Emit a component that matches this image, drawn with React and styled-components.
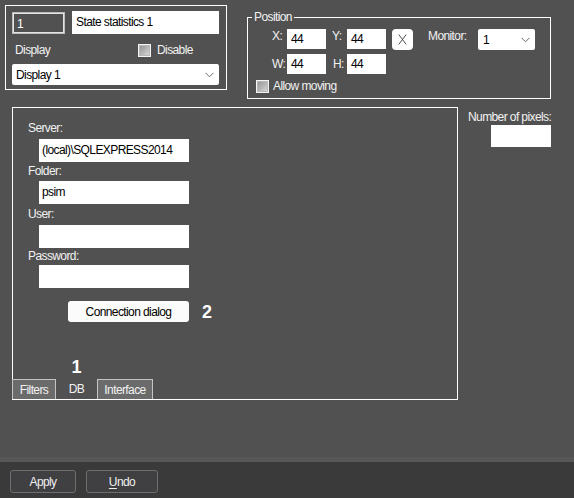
import React from "react";
import styled, { createGlobalStyle } from "styled-components";

const Global = createGlobalStyle`
  html, body { margin: 0; padding: 0; }
  body {
    background: #515151;
    font-family: "Liberation Sans", Arial, sans-serif;
    font-size: 12px;
    letter-spacing: -0.6px;
    color: #f2f2f2;
  }
  * { box-sizing: border-box; }
`;

const Page = styled.div`
  width: 574px;
  height: 498px;
  display: flex;
  flex-direction: column;
  overflow: hidden;
`;

const Workspace = styled.div`
  height: 457px;
  display: flex;
  flex-direction: column;
`;

const TopRow = styled.div`
  display: flex;
  align-items: flex-start;
  padding: 5px 0 0 5px;
`;

const GeneralBox = styled.div`
  width: 222px;
  height: 85px;
  border: 1px solid #ffffff;
  padding: 5px 0 0 6px;
  display: flex;
  flex-direction: column;
`;

const Row = styled.div`
  display: flex;
  align-items: ${(p) => p.$align || "center"};
  margin-top: ${(p) => p.$mt || 0}px;
  padding-left: ${(p) => p.$pl || 0}px;
  gap: ${(p) => p.$gap || 0}px;
`;

const IdField = styled.div`
  width: 53px;
  height: 22px;
  margin-top: 1px;
  border: 1px solid #bdbdbd;
  box-shadow: inset 0 0 0 1px #e4e4e4;
  color: #ffffff;
  padding: 4px 0 0 4px;
  line-height: 14px;
`;

const TextBox = styled.div`
  width: ${(p) => p.$w}px;
  height: ${(p) => p.$h || 22}px;
  margin-left: ${(p) => p.$ml || 0}px;
  margin-top: ${(p) => p.$mt || 0}px;
  background: #ffffff;
  color: #000000;
  line-height: ${(p) => p.$h || 22}px;
  padding-left: ${(p) => p.$pl || 3}px;
  white-space: nowrap;
  overflow: hidden;
  flex-shrink: 0;
`;

const Label = styled.span`
  display: inline-block;
  line-height: 14px;
  width: ${(p) => (p.$w ? `${p.$w}px` : "auto")};
  margin-left: ${(p) => p.$ml || 0}px;
  flex-shrink: 0;
  white-space: nowrap;
`;

const Check = styled.span`
  display: inline-block;
  width: 13px;
  height: 13px;
  margin-left: ${(p) => p.$ml || 0}px;
  border: 1px solid #f4f4f4;
  background: linear-gradient(135deg, #8f8f8f 0%, #bdbdbd 60%, #dcdcdc 100%);
  box-shadow: inset 0 0 0 1px #b8b8b8;
  flex-shrink: 0;
`;

const SelectBox = styled.div`
  width: ${(p) => p.$w}px;
  height: 21px;
  margin-left: ${(p) => p.$ml || 0}px;
  margin-top: ${(p) => p.$mt || 0}px;
  background: #ffffff;
  color: #000000;
  display: flex;
  align-items: center;
  justify-content: space-between;
  padding: 0 5px 0 ${(p) => p.$pl || 4}px;
  border-radius: 2px;
  flex-shrink: 0;
`;

const Chevron = () => (
  <svg width="9" height="6" viewBox="0 0 9 6">
    <polyline points="0.5,0.8 4.5,4.8 8.5,0.8" fill="none" stroke="#6a6a6a" strokeWidth="1" />
  </svg>
);

const PositionSet = styled.fieldset`
  margin: 6px 0 0 20px;
  padding: 0;
  width: 304px;
  height: 88px;
  border: 1px solid #ffffff;
  min-width: 0;
`;

const Legend = styled.legend`
  margin-left: 4px;
  padding: 0 2px;
  line-height: 12px;
  color: #f2f2f2;
`;

const PosContent = styled.div`
  padding-top: 6px;
  display: flex;
  flex-direction: column;
`;

const NumBox = styled.div`
  width: 39px;
  height: 20px;
  background: #ffffff;
  color: #000000;
  line-height: 20px;
  padding-left: 4px;
  flex-shrink: 0;
  margin-left: ${(p) => p.$ml || 0}px;
`;

const ClearButton = styled.div`
  width: 21px;
  height: 21px;
  margin-left: 6px;
  background: #ffffff;
  border-radius: 4px;
  display: flex;
  align-items: center;
  justify-content: center;
  flex-shrink: 0;
`;

const CrossIcon = () => (
  <svg width="9" height="11" viewBox="0 0 9 11">
    <path d="M0.8 0.6 L8.2 10.4 M8.2 0.6 L0.8 10.4" stroke="#3a3a3a" strokeWidth="0.9" fill="none" />
  </svg>
);

const MiddleRow = styled.div`
  display: flex;
  align-items: flex-start;
  margin-top: 8px;
  padding-left: 12px;
`;

const Panel = styled.div`
  width: 446px;
  height: 293px;
  border: 1px solid #ffffff;
  padding: 13px 0 0 15px;
  display: flex;
  flex-direction: column;
`;

const FieldLabel = styled.div`
  line-height: 14px;
  margin-top: ${(p) => p.$mt || 0}px;
`;

const PanelButton = styled.div`
  width: 121px;
  height: 21px;
  margin-left: 40px;
  background: #fbfbfb;
  border-radius: 3px;
  color: #000000;
  display: flex;
  align-items: center;
  justify-content: center;
`;

const Callout = styled.span`
  font-size: 18px;
  font-weight: bold;
  line-height: 18px;
  letter-spacing: 0;
  color: #ffffff;
  margin-left: ${(p) => p.$ml || 0}px;
  margin-bottom: ${(p) => p.$mb || 0}px;
`;

const TabRow = styled.div`
  margin-top: auto;
  margin-left: -16px;
  display: flex;
  align-items: flex-end;
`;

const Tab = styled.div`
  width: ${(p) => p.$w}px;
  height: 20px;
  background: ${(p) => (p.$active ? "transparent" : "#6b6b6b")};
  border: ${(p) => (p.$active ? "none" : "1px solid #c4c4c4")};
  border-bottom: none;
  display: flex;
  align-items: center;
  justify-content: center;
  color: #f2f2f2;
`;

const ActiveTab = styled.div`
  width: ${(p) => p.$w}px;
  display: flex;
  flex-direction: column;
  align-items: center;
`;

const SideColumn = styled.div`
  margin-left: 10px;
  padding-top: 3px;
  display: flex;
  flex-direction: column;
`;

const Band = styled.div`
  height: 5px;
  background: #575757;
`;

const Footer = styled.div`
  flex: 1;
  background: #3b3a3b;
  display: flex;
  align-items: flex-start;
  gap: 10px;
  padding: 8px 0 0 10px;
`;

const FooterButton = styled.div`
  width: ${(p) => p.$w}px;
  height: 23px;
  border: 1px solid #6e6e6e;
  border-radius: 3px;
  background: #403f42;
  color: #f0f0f0;
  display: flex;
  align-items: center;
  justify-content: center;
`;

const Underlined = styled.span`
  text-decoration: underline;
  text-underline-offset: 2px;
`;

export default function App() {
  return (
    <Page>
      <Global />
      <Workspace>
        <TopRow>
          <GeneralBox>
            <Row $align="flex-start">
              <IdField>1</IdField>
              <TextBox $w={147} $h={23} $ml={7} $pl={4}>State statistics 1</TextBox>
            </Row>
            <Row $mt={9}>
              <Label $ml={3} $w={123}>Display</Label>
              <Check />
              <Label $ml={6}>Disable</Label>
            </Row>
            <SelectBox $w={207} $mt={7}>
              <span>Display 1</span>
              <Chevron />
            </SelectBox>
          </GeneralBox>

          <PositionSet>
            <Legend>Position</Legend>
            <PosContent>
              <Row $align="flex-start" $pl={24}>
                <Label $w={15}>X:</Label>
                <NumBox>44</NumBox>
                <Label $w={15} $ml={6}>Y:</Label>
                <NumBox>44</NumBox>
                <ClearButton>
                  <CrossIcon />
                </ClearButton>
                <Label $w={50} $ml={15}>Monitor:</Label>
                <SelectBox $w={57} $pl={5}>
                  <span>1</span>
                  <Chevron />
                </SelectBox>
              </Row>
              <Row $mt={4} $pl={24}>
                <Label $w={15}>W:</Label>
                <NumBox>44</NumBox>
                <Label $w={15} $ml={7}>H:</Label>
                <NumBox $ml={-1}>44</NumBox>
              </Row>
              <Row $mt={5} $pl={8}>
                <Check />
                <Label $ml={4}>Allow moving</Label>
              </Row>
            </PosContent>
          </PositionSet>
        </TopRow>

        <MiddleRow>
          <Panel>
            <FieldLabel>Server:</FieldLabel>
            <TextBox $w={150} $h={23} $ml={11} $mt={4}>(local)\SQLEXPRESS2014</TextBox>
            <FieldLabel $mt={2}>Folder:</FieldLabel>
            <TextBox $w={150} $h={23} $ml={11} $mt={3}>psim</TextBox>
            <FieldLabel $mt={3}>User:</FieldLabel>
            <TextBox $w={150} $h={23} $ml={11} $mt={4} />
            <FieldLabel $mt={1}>Password:</FieldLabel>
            <TextBox $w={150} $h={23} $ml={11} $mt={2} />
            <Row $mt={13}>
              <PanelButton>Connection dialog</PanelButton>
              <Callout $ml={13}>2</Callout>
            </Row>
            <TabRow>
              <Tab $w={44}>Filters</Tab>
              <ActiveTab $w={41}>
                <Callout $mb={3}>1</Callout>
                <Tab $w={41} $active>DB</Tab>
              </ActiveTab>
              <Tab $w={56}>Interface</Tab>
            </TabRow>
          </Panel>

          <SideColumn>
            <Label>Number of pixels:</Label>
            <TextBox $w={60} $h={22} $ml={23} $mt={1} />
          </SideColumn>
        </MiddleRow>
      </Workspace>
      <Band />
      <Footer>
        <FooterButton $w={66}>Apply</FooterButton>
        <FooterButton $w={72}>
          <span><Underlined>U</Underlined>ndo</span>
        </FooterButton>
      </Footer>
    </Page>
  );
}
